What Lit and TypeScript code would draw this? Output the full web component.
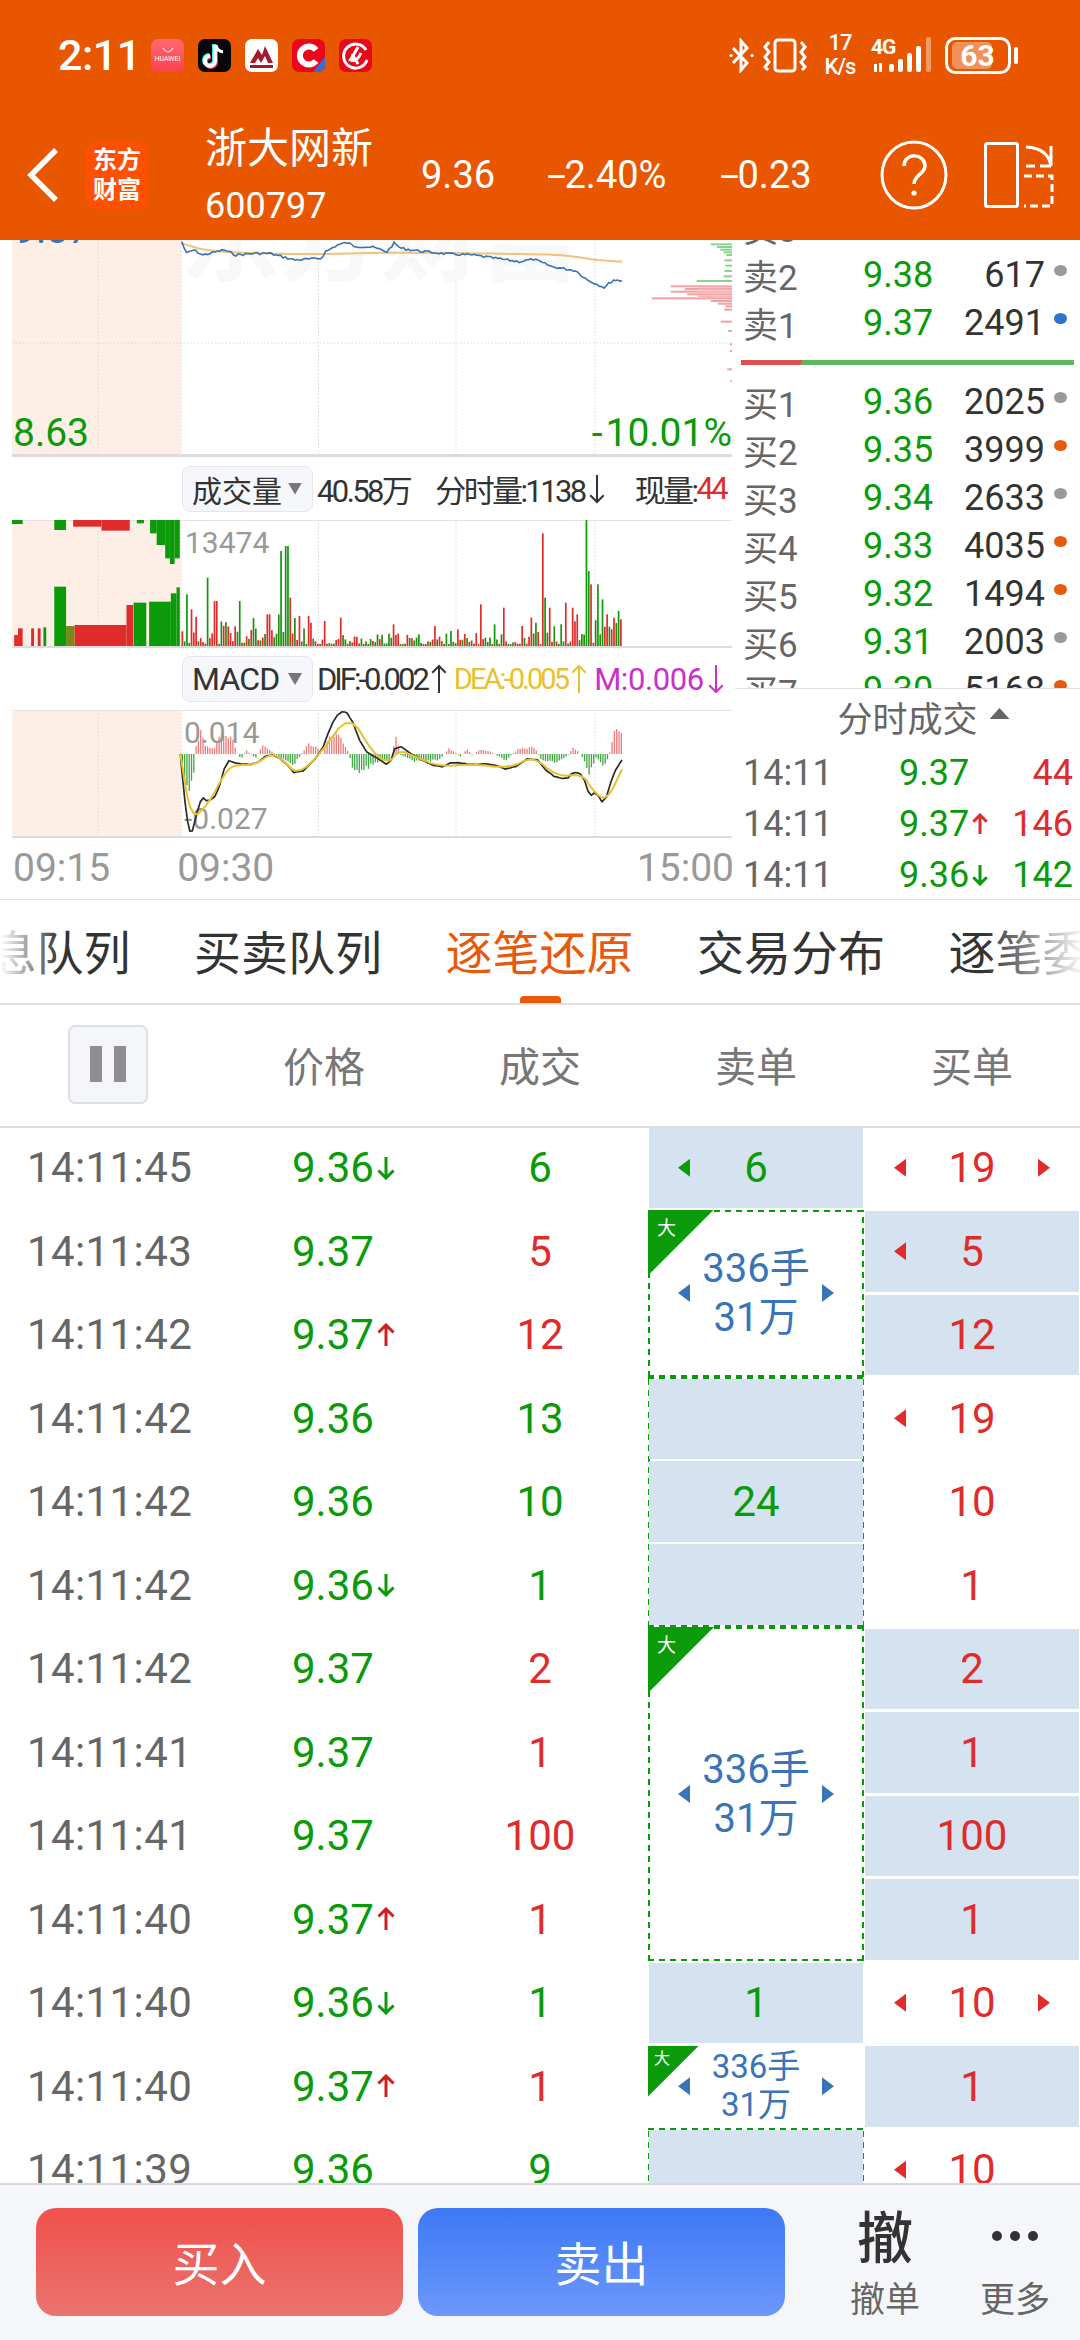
import { LitElement, html, css, svg, unsafeCSS } from "lit";
import { customElement } from "lit/decorators.js";

const GREEN = "#0a9a0a";
const RED = "#e02b2b";

function rng(seed: number) {
  let s = seed;
  return () => {
    s = (s * 9301 + 49297) % 233280;
    return s / 233280;
  };
}

const zx = (x: number) => x / 2.119 - 12;

function chaikin(pts: number[][], n = 2) {
  let p = pts;
  for (let k = 0; k < n; k++) {
    const o: number[][] = [p[0]];
    for (let i = 0; i < p.length - 1; i++) {
      const [a, b] = p[i];
      const [c, d] = p[i + 1];
      o.push([a * 0.75 + c * 0.25, b * 0.75 + d * 0.25], [a * 0.25 + c * 0.75, b * 0.25 + d * 0.75]);
    }
    o.push(p[p.length - 1]);
    p = o;
  }
  return p;
}

function interp(pts: number[][], step: number, noise: number, seed: number, off: number) {
  const r = rng(seed);
  const out: string[] = [];
  for (let i = 0; i < pts.length - 1; i++) {
    const [x0, y0] = pts[i];
    const [x1, y1] = pts[i + 1];
    const n = Math.max(1, Math.round((x1 - x0) / step));
    for (let k = 0; k < n; k++) {
      const t = k / n;
      const j = noise ? (r() - 0.5) * noise : 0;
      out.push(`${zx(x0 + (x1 - x0) * t).toFixed(1)},${((y0 + (y1 - y0) * t) / 3 - off + j).toFixed(1)}`);
    }
  }
  const l = pts[pts.length - 1];
  out.push(`${zx(l[0]).toFixed(1)},${(l[1] / 3 - off).toFixed(1)}`);
  return out.join(" ");
}

const grid = (h: number) =>
  [98, 181, 318.5, 456, 595].map(
    (x) => svg`<line x1=${x - 12} x2=${x - 12} y1="0" y2=${h} stroke="#d8d8d8" stroke-dasharray="1.5 2"></line>`
  );

function priceChart() {
  const blue = [[385,35],[395,70],[410,60],[430,75],[475,60],[500,75],[540,70],[570,70],[625,90],[680,85],[690,65],[715,45],[735,38],[750,48],[790,52],[820,65],[835,40],[850,55],[900,65],[950,72],[1000,75],[1050,85],[1100,95],[1130,88],[1170,110],[1220,122],[1245,150],[1280,172],[1300,150],[1318,152]];
  const yellow = [[385,40],[430,60],[500,68],[600,72],[700,72],[800,68],[900,68],[1000,70],[1100,72],[1200,75],[1260,90],[1318,95]];
  const dist: [number, number, string][] = [
    [40,45,"g"],[48,32,"g"],[56,25,"g"],[64,18,"g"],[72,12,"g"],[88,16,"g"],[104,14,"g"],[120,16,"g"],[136,18,"g"],[150,75,"g"],
    [166,130,"r"],[174,100,"r"],[182,130,"r"],[190,95,"r"],[202,170,"r"],[210,45,"r"],[218,30,"r"],[226,14,"r"],[236,16,"r"],[272,24,"r"],[300,8,"r"],[340,5,"r"],[360,5,"r"],[415,10,"r"],[450,3,"r"],[675,24,"r"]
  ];
  return html`<svg class="chart" width="720" height="217" viewBox="0 0 720 217">
    <rect x="0" y="0" width="169" height="217" fill="#fdeee6"></rect>
    ${grid(215)}
    <line x1="0" x2="720" y1="103" y2="103" stroke="#d8d8d8" stroke-dasharray="1.5 2"></line>
    <text class="wm" x="168" y="33">东方财富</text>
    <text x="2" y="3" class="ax" fill="#3a74b8">9.87</text>
    ${dist.map(([y, l, c]) => svg`<rect x=${720 - l / 2.119} y=${y / 3 - 10} width=${l / 2.119} height="2" fill=${c === "g" ? "#8fd08f" : "#f2a0a0"}></rect>`)}
    ${[170,176,182,188,194,198].map((y) => svg`<rect x=${720 - 34} y=${y / 3 - 10} width="34" height="1" fill="#f5b5b5"></rect>`)}
    <polyline points=${interp(chaikin(yellow), 10, 0, 1, 10)} fill="none" stroke="#f0c27a" stroke-width="2"></polyline>
    <polyline points=${interp(blue, 5, 2.4, 7, 10)} fill="none" stroke="#3a74b8" stroke-width="1.6"></polyline>
    <rect x="0" y="214" width="720" height="3" fill="#dcdcdc"></rect>
    <text x="1" y="206" class="ax" fill=${GREEN}>8.63</text>
    <text x="720" y="206" class="ax" text-anchor="end" fill=${GREEN}><tspan dx="0">-</tspan><tspan dx="3">10.01%</tspan></text>
  </svg>`;
}

function volChart() {
  const r = rng(11);
  const peaks: [number, number, string][] = [
    [395,1095,"g"],[402,1140,"r"],[440,1045,"g"],[452,1115,"r"],[458,1115,"r"],[505,1115,"g"],[595,965,"g"],[606,950,"g"],[611,1105,"r"],[635,1160,"r"],[567,1155,"r"],[688,1175,"r"],[718,1165,"r"],[830,1185,"r"],[880,1225,"g"],[918,1190,"r"],[955,1205,"g"],[970,1200,"r"],[1015,1125,"r"],[1045,1185,"g"],[1065,1135,"r"],[1105,1190,"r"],[1125,1165,"r"],[1148,912,"r"],[1152,1105,"g"],[1165,1135,"r"],[1195,1120,"r"],[1210,1135,"r"],[1222,1155,"r"],[1240,872,"g"],[1244,1025,"g"],[1252,1065,"r"],[1265,1065,"g"],[1275,1110,"g"],[1285,1155,"r"],[1298,1165,"r"],[1308,1145,"g"],[1316,1170,"r"],[1320,1220,"r"]
  ];
  const bars: { x: number; h: number; c: string }[] = [];
  for (let i = 0; i < 192; i++) {
    const x = 169.5 + i * 2.296;
    const zoomX = (x + 12) * 2.119;
    const early = zoomX < 680 ? 30 : zoomX > 1100 ? 26 : 11;
    let h = 2 + Math.pow(r(), 2) * early;
    let c = r() > 0.5 ? RED : "#2a8a12";
    const hit = peaks.find((p) => Math.abs(p[0] - zoomX) < 2.5);
    if (hit) {
      h = (1250 - hit[1]) / 3;
      c = hit[2] === "g" ? GREEN : RED;
    }
    bars.push({ x, h, c });
  }
  const z = (x0: number, x1: number, top: number, bot: number, c: string) =>
    svg`<rect x=${zx(x0)} width=${(x1 - x0) / 2.119} y=${top / 3 - 290} height=${(bot - top) / 3} fill=${c}></rect>`;
  return html`<svg class="chart" width="720" height="128" viewBox="0 0 720 128">
    <rect x="0" y="0" width="169" height="128" fill="#fdeee6"></rect>
    ${grid(126)}
    <line x1="0" x2="720" y1="0.5" y2="0.5" stroke="#e2e2e2"></line>
    ${z(25,48,870,882,GREEN)}${z(115,140,870,900,GREEN)}${z(155,215,870,890,RED)}${z(215,275,870,902,RED)}${z(290,305,870,880,GREEN)}
    ${z(318,332,870,910,GREEN)}${z(332,350,870,945,GREEN)}${z(350,360,870,985,GREEN)}${z(360,370,870,1002,GREEN)}${z(370,381,870,985,GREEN)}
    ${z(30,38,1215,1250,RED)}${z(38,48,1195,1250,RED)}${z(66,72,1195,1250,RED)}${z(80,86,1195,1250,RED)}${z(92,98,1192,1250,GREEN)}
    ${z(115,140,1070,1250,GREEN)}${z(140,158,1188,1250,"#7a8a1a")}${z(158,268,1185,1250,RED)}${z(268,282,1125,1250,RED)}${z(283,310,1118,1250,GREEN)}${z(316,362,1115,1250,GREEN)}${z(362,374,1090,1250,GREEN)}${z(374,381,1072,1250,GREEN)}
    ${bars.map((b) => svg`<rect x=${b.x} y=${126 - b.h} width="1.7" height=${b.h} fill=${b.c}></rect>`)}
    <rect x="0" y="126" width="720" height="2" fill="#dcdcdc"></rect>
    <text x="173" y="33" class="sm" fill="#999">13474</text>
  </svg>`;
}

function macdChart() {
  const dif = [[382,312],[395,500],[405,558],[415,500],[428,440],[440,455],[460,435],[480,330],[500,340],[540,345],[570,310],[600,330],[630,380],[680,310],[700,230],[720,183],[740,190],[770,300],[800,325],[825,348],[840,280],[880,320],[930,355],[960,335],[1000,345],[1040,340],[1080,362],[1130,315],[1165,375],[1200,390],[1215,365],[1235,375],[1250,440],[1262,425],[1280,465],[1300,370],[1318,330]];
  const dea = [[382,312],[405,510],[440,465],[480,360],[500,345],[540,345],[575,310],[600,330],[630,375],[680,310],[740,190],[790,310],[825,340],[845,300],[880,320],[930,350],[1000,342],[1080,355],[1130,318],[1180,380],[1235,372],[1255,420],[1285,455],[1318,358]];
  const hist = [[385,-60],[398,-115],[410,-60],[414,30],[425,70],[435,25],[450,15],[470,70],[490,50],[500,5],[510,-15],[520,12],[540,-12],[555,25],[575,8],[590,-10],[620,-35],[635,-5],[650,30],[670,25],[680,-5],[695,50],[715,60],[735,15],[745,-40],[760,-60],[790,-30],[825,-20],[838,60],[848,-5],[880,-25],[930,-18],[950,18],[975,-8],[988,18],[1000,-5],[1015,16],[1040,6],[1070,-20],[1095,15],[1130,22],[1145,-15],[1170,-30],[1200,-8],[1215,22],[1230,-4],[1248,-60],[1262,-10],[1280,-40],[1292,10],[1302,78],[1318,55]];
  const r = rng(5);
  const bars: { x: number; h: number }[] = [];
  for (let zxv = 385; zxv <= 1320; zxv += 4.87) {
    let i = 0;
    while (i < hist.length - 2 && hist[i + 1][0] < zxv) i++;
    const [a, av] = hist[i];
    const [b, bv] = hist[i + 1];
    const t = Math.min(1, Math.max(0, (zxv - a) / (b - a)));
    bars.push({ x: zx(zxv), h: (av + (bv - av) * t) * (0.75 + r() * 0.35) / 3 });
  }
  const zero = 312 / 3 - 60;
  return html`<svg class="chart" width="720" height="128" viewBox="0 0 720 128">
    <rect x="0" y="0" width="169" height="128" fill="#fdeee6"></rect>
    ${grid(126)}
    <line x1="0" x2="720" y1="0.5" y2="0.5" stroke="#e2e2e2"></line>
    ${bars.map((b) => svg`<rect x=${b.x} width="1.3" y=${b.h > 0 ? zero - b.h : zero} height=${Math.abs(b.h)} fill=${b.h > 0 ? "#ec7b7b" : "#3fa83f"}></rect>`)}
    <text x="172" y="33" class="sm" fill="#999">0.014</text>
    <text x="172" y="119" class="sm" fill="#999">-0.027</text>
    <polyline points=${interp(chaikin(dif, 1), 6, 0.5, 3, 60)} fill="none" stroke="#2b2b2b" stroke-width="1.7" stroke-linejoin="round"></polyline>
    <polyline points=${interp(chaikin(dea), 12, 0, 3, 60)} fill="none" stroke="#e9c02f" stroke-width="2" stroke-linejoin="round"></polyline>
    <rect x="0" y="126" width="720" height="2" fill="#dcdcdc"></rect>
  </svg>`;
}

const arrow = (dir: "up" | "down", color: string, w = 16, h = 22, sw = 3) => {
  const cx = w / 2;
  const head = w * 0.42;
  const d =
    dir === "up"
      ? `M${cx} ${h - 1}V2M${cx - head} ${head + 2}L${cx} 2L${cx + head} ${head + 2}`
      : `M${cx} 1V${h - 2}M${cx - head} ${h - head - 2}L${cx} ${h - 2}L${cx + head} ${h - head - 2}`;
  return html`<svg class="arr" width=${w} height=${h} viewBox="0 0 ${w} ${h}"><path d=${d} fill="none" stroke=${color} stroke-width=${sw}></path></svg>`;
};

const book = [
  ["卖3", "9.39", "787", "g"],
  ["卖2", "9.38", "617", "g"],
  ["卖1", "9.37", "2491", "b"],
  null,
  ["买1", "9.36", "2025", "g"],
  ["买2", "9.35", "3999", "o"],
  ["买3", "9.34", "2633", "g"],
  ["买4", "9.33", "4035", "o"],
  ["买5", "9.32", "1494", "o"],
  ["买6", "9.31", "2003", "g"],
  ["买7", "9.30", "5168", "o"],
];

const ticks: [string, string, "" | "up" | "down", string, string][] = [
  ["14:11", "9.37", "", "44", "r"],
  ["14:11", "9.37", "up", "146", "r"],
  ["14:11", "9.36", "down", "142", "g"],
];

const rows: [string, string, "" | "up" | "down", string, string][] = [
  ["14:11:45", "9.36", "down", "6", "g"],
  ["14:11:43", "9.37", "", "5", "r"],
  ["14:11:42", "9.37", "up", "12", "r"],
  ["14:11:42", "9.36", "", "13", "g"],
  ["14:11:42", "9.36", "", "10", "g"],
  ["14:11:42", "9.36", "down", "1", "g"],
  ["14:11:42", "9.37", "", "2", "r"],
  ["14:11:41", "9.37", "", "1", "r"],
  ["14:11:41", "9.37", "", "100", "r"],
  ["14:11:40", "9.37", "up", "1", "r"],
  ["14:11:40", "9.36", "down", "1", "g"],
  ["14:11:40", "9.37", "up", "1", "r"],
  ["14:11:39", "9.36", "", "9", "g"],
];

const buys: [string, boolean, boolean, boolean][] = [
  ["19", false, true, true],
  ["5", true, true, false],
  ["12", true, false, false],
  ["19", false, true, false],
  ["10", false, false, false],
  ["1", false, false, false],
  ["2", true, false, false],
  ["1", true, false, false],
  ["100", true, false, false],
  ["1", true, false, false],
  ["10", false, true, true],
  ["1", true, false, false],
  ["10", false, true, false],
];

const G = unsafeCSS(GREEN);
const R = unsafeCSS(RED);

@customElement("app-root")
export class AppRoot extends LitElement {
  static styles = css`
    :host {
      display: block;
      width: 1080px;
      height: 2340px;
      overflow: hidden;
      background: #fff;
      font-family: Roboto, "Noto Sans CJK SC", sans-serif;
      color: #333;
    }
    .page { display: flex; flex-direction: column; height: 2340px; }
    .head { height: 240px; background: #e85700; color: #fff; flex: none; }
    .status { height: 110px; display: flex; align-items: center; padding: 0 61px 0 58px; }
    .time { font-size: 43px; font-weight: 500; width: 93px; flex: none; letter-spacing: -0.5px; }
    .tiles { display: flex; gap: 14px; }
    .tile { width: 33px; height: 33px; border-radius: 7px; display: flex; align-items: center; justify-content: center; overflow: hidden; }
    .tile svg { display: block; }
    .hw { background: linear-gradient(#ff6a72, #f8434f); font-size: 7px; color: #fff; flex-direction: column; gap: 2px; }
    .sicons { margin-left: auto; display: flex; align-items: center; }
    .speed { font-size: 22px; line-height: 24px; text-align: center; width: 34px; margin: 0 14px 0 16px; letter-spacing: -1px; font-weight: 500; }
    .sig { position: relative; width: 62px; height: 37px; margin-right: 12px; }
    .sig span { position: absolute; left: 0; top: -1px; font-size: 21px; font-weight: 700; letter-spacing: -1px; line-height: 22px; }
    .batt { position: relative; width: 74px; height: 37px; }
    .batt span { position: absolute; left: 0; width: 65px; top: 0; text-align: center; line-height: 37px; font-size: 30px; font-weight: 700; }

    .nav { height: 130px; display: flex; align-items: center; padding: 0 26px 0 27px; }
    .back { margin-right: 27px; flex: none; display: block; }
    .logo { width: 62px; height: 67px; border-radius: 12px; background: #ff5000; font-size: 24px; line-height: 30px; font-weight: 700; text-align: center; flex: none; margin-right: 57px; display: flex; align-items: center; justify-content: center; }
    .names { width: 216px; flex: none; }
    .nm { font-size: 42px; line-height: 50px; }
    .code { font-size: 36px; line-height: 40px; margin-top: 12px; }
    .v { font-size: 38px; flex: none; }
    .v .mn { display: inline-block; transform: scaleX(1.8); transform-origin: left center; padding-right: 7px; }
    .v1 { width: 126px; } .v2 { width: 173px; } .v3 { width: 160px; }
    .nav .ico { display: block; flex: none; }
    .nav .q { margin-right: 36px; }

    .market { flex: none; display: flex; border-bottom: 1px solid #e4e4e4; overflow: hidden; box-sizing: border-box; height: 660px; }
    .left { width: 735px; flex: none; padding-left: 12px; box-sizing: border-box; }
    .chart { display: block; font-family: Roboto, sans-serif; overflow: hidden; }
    .chart .ax { font-size: 39px; }
    .chart .sm { font-size: 30px; }
    .chart .wm { font-family: "Noto Sans CJK SC", sans-serif; font-size: 100px; fill: #f8f8f8; font-weight: 700; }
    .ind { height: 63px; display: flex; align-items: center; box-sizing: border-box; }
    .ind.m { height: 62px; }
    .pill { margin-left: 170px; width: 131px; height: 46px; box-sizing: border-box; background: #f6f7fa; border: 1px solid #e4e6ec; border-radius: 8px; display: flex; align-items: center; font-size: 30px; color: #333; padding-left: 9px; flex: none; }
    .pill .tx { width: 96px; flex: none; white-space: nowrap; }
    .pill.mc .tx { font-size: 32px; letter-spacing: -0.8px; }
    .pill i { width: 14px; height: 12px; background: #777; clip-path: polygon(0 0, 100% 0, 50% 100%); display: block; }
    .lab { font-size: 31px; letter-spacing: -2.6px; white-space: nowrap; color: #333; display: flex; align-items: center; flex: none; }
    .lab .arr { margin-left: 4px; }
    .lab.di { letter-spacing: -3px; margin-left: 4px; }
    .lab.de { font-size: 29px; letter-spacing: -2.9px; color: #e9c02f; margin-left: 7px; }
    .lab.mm { letter-spacing: -0.4px; color: #cc2fc8; margin-left: 7px; }
    .tax { height: 60px; position: relative; font-size: 39px; color: #999; display: flex; align-items: center; }
    .tax span { flex: none; }

    .right { width: 345px; flex: none; display: flex; flex-direction: column; }
    .list { height: 449px; overflow: hidden; flex: none; border-bottom: 1px solid #e3e3e3; box-sizing: border-box; }
    .list-in { margin-top: -39px; }
    .br { display: grid; grid-template-columns: 120px 90px 92px 22px; height: 48px; align-items: center; font-size: 36px; padding-left: 8px; }
    .br .l { color: #666; white-space: nowrap; font-size: 35px; }
    .br .p { color: ${G}; }
    .br .q { text-align: right; color: #333; }
    .dot { width: 13px; height: 11px; border-radius: 50%; justify-self: end; margin-top: -8px; }
    .dot.g { background: #9a9a9e; } .dot.b { background: #2f74c8; } .dot.o { background: #e85a10; }
    .ratio { height: 5px; margin: 15px 6px 11px 6px; background: linear-gradient(115deg, #e05050 18.3%, #5cb85c 18.5%); }
    .ftitle { height: 58px; box-sizing: border-box; padding: 0 0 3px 32px; display: flex; align-items: center; justify-content: center; font-size: 35px; color: #666; gap: 12px; flex: none; }
    .ftitle i { width: 20px; height: 11px; background: #666; clip-path: polygon(50% 0, 100% 100%, 0 100%); display: block; margin-top: -6px; }
    .tick { display: grid; grid-template-columns: 156px 90px 1fr; height: 51px; align-items: center; font-size: 36px; padding: 0 7px 0 8px; flex: none; }
    .tick .t { color: #666; }
    .tick .p { color: ${G}; display: flex; align-items: center; gap: 3px; white-space: nowrap; }
    .tick .q { text-align: right; }

    .tabs { height: 105px; flex: none; position: relative; overflow: hidden; border-bottom: 2px solid #e2e2e2; box-sizing: border-box; }
    .tabs-in { display: flex; gap: 63.5px; margin-left: -57.5px; padding-top: 27px; white-space: nowrap; font-size: 47px; line-height: 54px; color: #333; width: 1300px; }
    .tabs-in span.on { color: #e8590c; }
    .ul { position: absolute; left: 520px; width: 41px; height: 7px; bottom: 0; background: #e8590c; border-radius: 4px 4px 0 0; }
    .fl, .fr { position: absolute; top: 0; bottom: 0; }
    .fl { left: 0; width: 60px; background: linear-gradient(90deg, #fff, rgba(255,255,255,0)); }
    .fr { right: 0; width: 95px; background: linear-gradient(90deg, rgba(255,255,255,0), rgba(255,255,255,0.95)); }

    .thead { display: grid; grid-template-columns: repeat(5, 216px); height: 123px; padding-bottom: 3px; flex: none; box-sizing: border-box; border-bottom: 2px solid #dedede; align-items: center; justify-items: center; font-size: 41px; color: #777; }
    .pause { width: 80px; height: 79px; box-sizing: border-box; background: #f5f6f9; border: 2px solid #dcdfe6; border-radius: 7px; display: flex; align-items: center; justify-content: center; gap: 12px; }
    .pause i { width: 12px; height: 36px; background: #8e8e92; display: block; }

    .tbl-wrap { flex: 1; overflow: hidden; min-height: 0; }
    .tbl { display: grid; grid-template-columns: repeat(5, 216px); grid-auto-rows: 83.5px; margin-top: -2px; font-size: 42px; }
    .c { display: flex; align-items: center; }
    .c.t { padding-left: 27px; color: #666; letter-spacing: 0.4px; }
    .c.p { padding-left: 76px; color: ${G}; gap: 3px; }
    .c.q { justify-content: center; }
    .g { color: ${G}; }
    .r { color: ${R}; }
    .cell { display: flex; align-items: center; justify-content: space-between; padding: 0 29px; margin: 1.5px 1px; box-sizing: border-box; }
    .cell.fill { background: #d5e2f0; }
    .cell .n { flex: 1; text-align: center; }
    .tri { width: 12px; height: 18px; display: block; flex: none; background: currentColor; }
    .tri.lf { clip-path: polygon(100% 0, 100% 100%, 0 50%); }
    .tri.rt { clip-path: polygon(0 0, 100% 50%, 0 100%); }
    .tri.no { visibility: hidden; }

    .dash {
      background-image:
        repeating-linear-gradient(90deg, ${G} 0 6px, transparent 6px 11px),
        repeating-linear-gradient(90deg, ${G} 0 6px, transparent 6px 11px),
        repeating-linear-gradient(0deg, ${G} 0 6px, transparent 6px 11px),
        repeating-linear-gradient(0deg, ${G} 0 6px, transparent 6px 11px);
      background-size: 100% 2px, 100% 2px, 2px 100%, 2px 100%;
      background-position: 0 0, 0 100%, 0 0, 100% 0;
      background-repeat: no-repeat;
    }
    .big { position: relative; box-sizing: border-box; background-color: #fff; display: flex; align-items: center; justify-content: space-between; padding: 0 30px; color: #3a74b8; font-size: 40px; line-height: 49px; text-align: center; z-index: 1; }
    .big .n { flex: 1; }
    .big.sm { font-size: 33px; line-height: 38px; }
    .big u { text-decoration: none; display: block; }
    .corner { position: absolute; left: 0; top: 0; width: 66px; height: 66px; background: ${G}; clip-path: polygon(0 0, 100% 0, 0 100%); color: #fff; font-size: 19px; line-height: 24px; text-align: left; }
    .corner b { font-weight: 400; position: absolute; left: 9px; top: 7px; }
    .big.sm .corner { left: 0; top: 1px; width: 51px; height: 51px; font-size: 16px; }
    .big.sm .corner b { left: 6px; top: 3px; line-height: 20px; }
    .grp { box-sizing: border-box; display: flex; flex-direction: column; gap: 2px; padding: 2px 1px; }
    .grp div { flex: 1; background: #d5e2f0; display: flex; align-items: center; justify-content: center; color: ${G}; }

    .foot { height: 157px; flex: none; box-sizing: border-box; background: #f5f6f9; border-top: 2px solid #d8dae0; display: flex; padding: 23px 0 0 36px; }
    .btn { width: 367px; height: 108px; box-sizing: border-box; padding-bottom: 3px; border-radius: 20px; color: #fff; font-size: 47px; display: flex; align-items: center; justify-content: center; flex: none; }
    .buy { background: linear-gradient(#f1514c, #e9736e); margin-right: 15px; }
    .sell { background: linear-gradient(#3d78f5, #6c98fb); margin-right: 35px; }
    .tool { width: 130px; flex: none; display: flex; flex-direction: column; align-items: center; font-size: 35px; color: #666; line-height: 42px; }
    .tool .top { height: 72px; display: flex; align-items: center; justify-content: center; font-size: 56px; color: #333; font-weight: 500; padding-bottom: 10px; box-sizing: border-box; }
    .dots { display: flex; gap: 8px; margin-top: -6px; }
    .dots i { width: 10px; height: 10px; border-radius: 50%; background: #333; display: block; }
  `;

  render() {
    const tri = (d: string, show: boolean) => html`<i class="tri ${d} ${show ? "" : "no"}"></i>`;
    const big = () => html`
      <div class="corner"><b>大</b></div>
      ${tri("lf", true)}
      <div class="n"><u>336手</u><u>31万</u></div>
      ${tri("rt", true)}
    `;
    return html`<div class="page">
      <div class="head">
        <div class="status">
          <div class="time">2:11</div>
          <div class="tiles">
            <div class="tile hw">
              <svg width="12" height="5" viewBox="0 0 12 5"><path d="M1 0q5 8 10 0" fill="none" stroke="#fff" stroke-width="1"></path></svg>
              <span>HUAWEI</span>
            </div>
            <div class="tile" style="background:#07070c">
              <svg width="33" height="33" viewBox="0 0 33 33" fill="none" stroke-width="4">
                <path d="M17 6v16a5 5 0 1 1-5-5" stroke="#25f4ee" transform="translate(-1 -1)"></path>
                <path d="M17 6v16a5 5 0 1 1-5-5" stroke="#fe2c55" transform="translate(1 1)"></path>
                <path d="M17 6v16a5 5 0 1 1-5-5" stroke="#fff"></path>
                <path d="M18 6q1 6 7 7" stroke="#fff" stroke-width="3"></path>
              </svg>
            </div>
            <div class="tile" style="background:#fff">
              <svg width="33" height="33" viewBox="0 0 33 33">
                <path d="M5 24L13 10l4 6 3-9 8 17h-5l-3-7-4 7-3-5-3 5z" fill="#a8182b"></path>
                <rect x="5" y="26" width="23" height="3" fill="#a8182b"></rect>
              </svg>
            </div>
            <div class="tile" style="background:#e8071b">
              <svg width="33" height="33" viewBox="0 0 33 33">
                <path d="M24 11a9 9 0 1 0 0 11" fill="none" stroke="#fff" stroke-width="6"></path>
                <path d="M33 18v15H21z" fill="#2f6fd6"></path>
              </svg>
            </div>
            <div class="tile" style="background:#e8071b">
              <svg width="33" height="33" viewBox="0 0 33 33" fill="none" stroke="#fff" stroke-width="3">
                <path d="M27 11a12 12 0 1 0 1 10"></path>
                <path d="M10 20q7 5 12-6M13 15l6 10M19 8l-8 14"></path>
              </svg>
            </div>
          </div>
          <div class="sicons">
            <svg width="25" height="35" viewBox="0 0 25 35" fill="none" stroke="#fff" stroke-width="3" style="margin-right:9px">
              <path d="M4 10l14 15-6 7V3l6 7L4 25"></path>
              <circle cx="2" cy="17.5" r="1.6" fill="#fff" stroke="none"></circle>
              <circle cx="23" cy="17.5" r="1.6" fill="#fff" stroke="none"></circle>
            </svg>
            <svg width="44" height="35" viewBox="0 0 44 35" fill="none" stroke="#fff" stroke-width="3">
              <rect x="12" y="2" width="20" height="31" rx="3"></rect>
              <path d="M6 4L2 9l4 5-4 5 4 5-4 5 3 3M38 4l4 5-4 5 4 5-4 5 4 5-3 3"></path>
            </svg>
            <div class="speed">17<br />K/s</div>
            <div class="sig">
              <span>4G</span>
              <svg width="62" height="37" viewBox="0 0 62 37" fill="#fff">
                <rect x="3" y="27" width="3" height="8"></rect><rect x="8" y="26" width="3" height="9"></rect>
                <rect x="18" y="27" width="5" height="8" rx="2"></rect><rect x="27" y="22" width="5" height="13" rx="2"></rect>
                <rect x="36" y="16" width="5" height="19" rx="2"></rect><rect x="45" y="9" width="5" height="26" rx="2"></rect>
                <rect x="55" y="0" width="5" height="35" rx="2" opacity="0.4"></rect>
              </svg>
            </div>
            <div class="batt">
              <svg width="74" height="37" viewBox="0 0 74 37">
                <rect x="7" y="5" width="40" height="27" rx="5" fill="#fff" opacity="0.35"></rect>
                <rect x="1.5" y="1.5" width="63" height="34" rx="9" fill="none" stroke="#fff" stroke-width="3"></rect>
                <rect x="69" y="10" width="4" height="17" rx="2" fill="#fff"></rect>
              </svg>
              <span>63</span>
            </div>
          </div>
        </div>
        <div class="nav">
          <svg class="back" width="32" height="54" viewBox="0 0 32 54" fill="none" stroke="#fff" stroke-width="5.5"><path d="M29 2L4 27l25 25"></path></svg>
          <div class="logo"><div>东方<br />财富</div></div>
          <div class="names"><div class="nm">浙大网新</div><div class="code">600797</div></div>
          <div class="v v1">9.36</div>
          <div class="v v2"><span class="mn">-</span>2.40%</div>
          <div class="v v3"><span class="mn">-</span>0.23</div>
          <svg class="ico q" width="68" height="70" viewBox="0 0 68 70" fill="none" stroke="#fff" stroke-width="3">
            <ellipse cx="34" cy="35" rx="32" ry="33"></ellipse>
            <path d="M24 26c0-14 21-13 21 0 0 8-11 9-11 18" stroke-width="3.5"></path>
            <circle cx="34" cy="53" r="2.6" fill="#fff" stroke="none"></circle>
          </svg>
          <svg class="ico" width="71" height="66" viewBox="0 0 71 66" fill="none" stroke="#fff" stroke-width="3">
            <rect x="1.5" y="1.5" width="32" height="63" rx="2"></rect>
            <path d="M40 34h28v30H40" stroke-dasharray="8 4"></path>
            <path d="M42 5q22 1 25 19M67 4v20M56 24h11M42 24h9"></path>
          </svg>
        </div>
      </div>

      <div class="market">
        <div class="left">
          ${priceChart()}
          <div class="ind">
            <div class="pill"><span class="tx">成交量</span><i></i></div>
            <span class="lab" style="margin-left:4px">40.58万</span>
            <span class="lab" style="margin-left:25px">分时量:1138${arrow("down", "#333", 16, 30, 2)}</span>
            <span class="lab" style="margin-left:30px">现量:<span class="r">44</span></span>
          </div>
          ${volChart()}
          <div class="ind m">
            <div class="pill mc"><span class="tx">MACD</span><i></i></div>
            <span class="lab di">DIF:-0.002${arrow("up", "#333", 16, 30, 2)}</span>
            <span class="lab de">DEA:-0.005${arrow("up", "#e9c02f", 16, 30, 2)}</span>
            <span class="lab mm">M:0.006${arrow("down", "#cc2fc8", 16, 30, 2)}</span>
          </div>
          ${macdChart()}
          <div class="tax">
            <span style="margin-left:1px">09:15</span>
            <span style="margin-left:67px">09:30</span>
            <span style="margin-left:auto;margin-right:1px">15:00</span>
          </div>
        </div>
        <div class="right">
          <div class="list">
            <div class="list-in">
              ${book.map((b) =>
                b
                  ? html`<div class="br"><span class="l">${b[0]}</span><span class="p">${b[1]}</span><span class="q">${b[2]}</span><span class="dot ${b[3]}"></span></div>`
                  : html`<div class="ratio"></div>`
              )}
            </div>
          </div>
          <div class="ftitle"><span>分时成交</span><i></i></div>
          ${ticks.map(
            (t) => html`<div class="tick"><span class="t">${t[0]}</span>
              <span class="p">${t[1]}${t[2] ? arrow(t[2], t[2] === "up" ? RED : GREEN, 16, 22, 3) : ""}</span>
              <span class="q ${t[4]}">${t[3]}</span></div>`
          )}
        </div>
      </div>

      <div class="tabs">
        <div class="tabs-in"><span>消息队列</span><span>买卖队列</span><span class="on">逐笔还原</span><span>交易分布</span><span>逐笔委托</span></div>
        <div class="fl"></div><div class="fr"></div>
        <div class="ul"></div>
      </div>

      <div class="thead">
        <div class="pause"><i></i><i></i></div>
        <span>价格</span><span>成交</span><span>卖单</span><span>买单</span>
      </div>

      <div class="tbl-wrap">
        <div class="tbl">
          ${rows.map((r, i) => html`
            <div class="c t" style="grid-column:1;grid-row:${i + 1}">${r[0]}</div>
            <div class="c p" style="grid-column:2;grid-row:${i + 1}">${r[1]}${r[2] ? arrow(r[2], r[2] === "up" ? "#d01f1f" : GREEN, 18, 24, 3) : ""}</div>
            <div class="c q ${r[4]}" style="grid-column:3;grid-row:${i + 1}">${r[3]}</div>
          `)}

          <div class="cell fill g" style="grid-column:4;grid-row:1">${tri("lf", true)}<span class="n">6</span>${tri("rt", false)}</div>
          <div class="big dash" style="grid-column:4;grid-row:2 / span 2">${big()}</div>
          <div class="grp dash" style="grid-column:4;grid-row:4 / span 3"><div></div><div>24</div><div></div></div>
          <div class="big dash" style="grid-column:4;grid-row:7 / span 4">${big()}</div>
          <div class="cell fill g" style="grid-column:4;grid-row:11"><span class="n">1</span></div>
          <div class="big sm" style="grid-column:4;grid-row:12">${big()}</div>
          <div class="grp dash" style="grid-column:4;grid-row:13 / span 3"><div></div></div>

          ${buys.map((b, i) => html`
            <div class="cell r ${b[1] ? "fill" : ""}" style="grid-column:5;grid-row:${i + 1}">
              ${tri("lf", b[2])}<span class="n">${b[0]}</span>${tri("rt", b[3])}
            </div>
          `)}
        </div>
      </div>

      <div class="foot">
        <div class="btn buy">买入</div>
        <div class="btn sell">卖出</div>
        <div class="tool"><div class="top">撤</div><div>撤单</div></div>
        <div class="tool"><div class="top"><div class="dots"><i></i><i></i><i></i></div></div><div>更多</div></div>
      </div>
    </div>`;
  }
}
